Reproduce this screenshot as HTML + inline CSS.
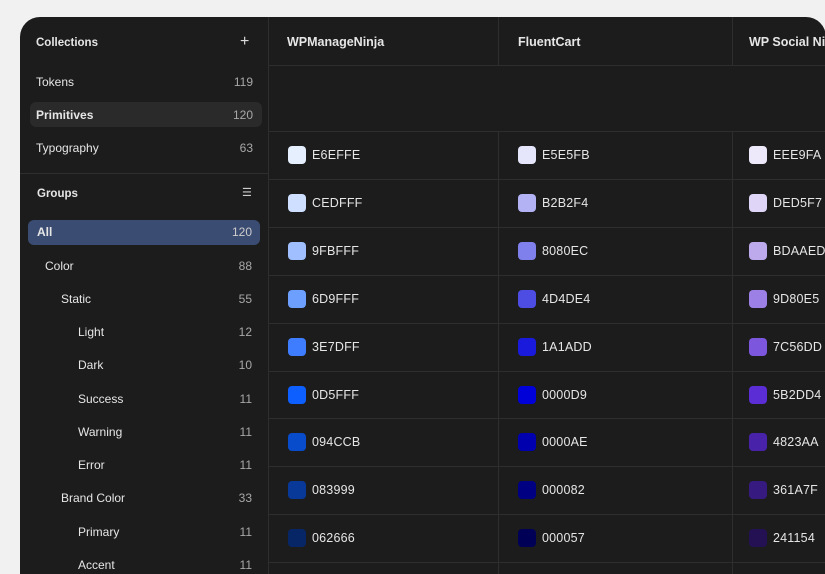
<!DOCTYPE html>
<html style="overflow:hidden;height:574px"><head><meta charset="utf-8"><style>
*{margin:0;padding:0;box-sizing:border-box}
body{width:825px;height:574px;background:#f1f1f1;overflow:hidden;font-family:"Liberation Sans",sans-serif;position:relative}
#p{position:absolute;left:20px;top:17px;width:806px;height:557px;background:#1c1c1c;border-radius:20px 20px 0 0;overflow:hidden}
.t{position:absolute;font-size:12px;color:#e6e6e6;white-space:nowrap}
.n{position:absolute;font-size:12px;color:#a8a8a8;right:0;text-align:right}
.b{font-weight:bold}
.hl{position:absolute;border-radius:6px}
.hline{position:absolute;height:1px;background:#2e2e2e}
.vline{position:absolute;width:1px;background:#2e2e2e}
.sw{position:absolute;width:18px;height:18px;border-radius:4px}
.c{position:absolute;font-size:12.5px;color:#e6e6e6;letter-spacing:.2px}
</style></head><body>
<div id="p">
<div class="vline" style="left:248px;top:0;height:600px"></div>
<div class="t b" style="left:16px;top:20px;font-size:11.5px">Collections</div>
<div class="t" style="left:220px;top:16px;font-size:16px;color:#ddd">+</div>
<div class="hl" style="left:10px;top:85px;width:232px;height:25px;background:#2a2a2a"></div>
<div class="hl" style="left:8px;top:203px;width:232px;height:25px;background:#3b4c72"></div>
<div class="hline" style="left:0;top:156px;width:248px"></div>
<div class="t" style="left:16px;top:58px">Tokens</div><div class="n" style="left:0;width:233px;top:58px">119</div>
<div class="t b" style="left:16px;top:91px">Primitives</div><div class="n" style="left:0;width:233px;top:91px">120</div>
<div class="t" style="left:16px;top:124px">Typography</div><div class="n" style="left:0;width:233px;top:124px">63</div>
<div class="t b" style="left:17px;top:171px;font-size:11.5px">Groups</div>
<div class="t" style="left:222px;top:169px;font-size:11px;color:#ccc">☰</div>
<div class="t b" style="left:17px;top:208px">All</div><div class="n" style="left:0;width:232px;top:208px;color:#ccc">120</div>
<div class="t" style="left:25px;top:242px">Color</div><div class="n" style="left:0;width:232px;top:242px">88</div>
<div class="t" style="left:41px;top:275px">Static</div><div class="n" style="left:0;width:232px;top:275px">55</div>
<div class="t" style="left:58px;top:308px">Light</div><div class="n" style="left:0;width:232px;top:308px">12</div>
<div class="t" style="left:58px;top:341px">Dark</div><div class="n" style="left:0;width:232px;top:341px">10</div>
<div class="t" style="left:58px;top:375px">Success</div><div class="n" style="left:0;width:232px;top:375px">11</div>
<div class="t" style="left:58px;top:408px">Warning</div><div class="n" style="left:0;width:232px;top:408px">11</div>
<div class="t" style="left:58px;top:441px">Error</div><div class="n" style="left:0;width:232px;top:441px">11</div>
<div class="t" style="left:41px;top:474px">Brand Color</div><div class="n" style="left:0;width:232px;top:474px">33</div>
<div class="t" style="left:58px;top:508px">Primary</div><div class="n" style="left:0;width:232px;top:508px">11</div>
<div class="t" style="left:58px;top:541px">Accent</div><div class="n" style="left:0;width:232px;top:541px">11</div>
<div class="vline" style="left:478px;top:0;height:48px"></div>
<div class="vline" style="left:712px;top:0;height:48px"></div>
<div class="vline" style="left:478px;top:114px;height:500px"></div>
<div class="vline" style="left:712px;top:114px;height:500px"></div>
<div class="hline" style="left:249px;top:48px;width:560px"></div>
<div class="hline" style="left:249px;top:114px;width:560px"></div>
<div class="t b" style="left:267px;top:18px;font-size:12.5px">WPManageNinja</div>
<div class="t b" style="left:498px;top:18px;font-size:12.5px">FluentCart</div>
<div class="t b" style="left:729px;top:18px;font-size:12.5px">WP Social Ninja</div>
<div id="rows"></div>
</div>
<script>
var a=["E6EFFE","CEDFFF","9FBFFF","6D9FFF","3E7DFF","0D5FFF","094CCB","083999","062666"];
var b=["E5E5FB","B2B2F4","8080EC","4D4DE4","1A1ADD","0000D9","0000AE","000082","000057"];
var c=["EEE9FA","DED5F7","BDAAED","9D80E5","7C56DD","5B2DD4","4823AA","361A7F","241154"];
var tops=[114,162,210,258,306,354,401,449,497,545];
var h="";
for(var i=0;i<9;i++){var y=tops[i];
 h+='<div class="hline" style="left:249px;top:'+tops[i+1]+'px;width:560px"></div>';
 [[a,268],[b,498],[c,729]].forEach(function(x){
  h+='<div class="sw" style="left:'+x[1]+'px;top:'+(y+15)+'px;background:#'+x[0][i]+'"></div>';
  h+='<div class="c" style="left:'+(x[1]+24)+'px;top:'+(y+17)+'px">'+x[0][i]+'</div>';
 });}
document.getElementById("rows").innerHTML=h;
</script>
</body></html>
